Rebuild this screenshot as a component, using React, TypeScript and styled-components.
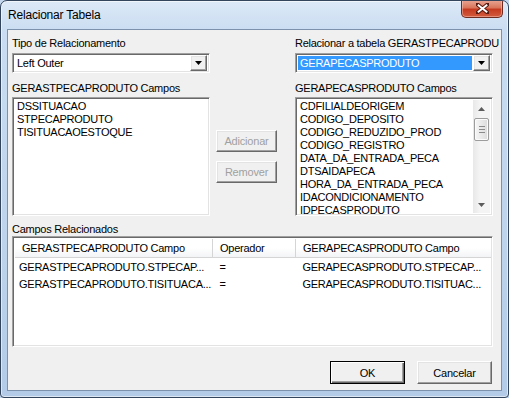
import styled, { createGlobalStyle } from "styled-components";

const GlobalStyle = createGlobalStyle`
  html, body {
    margin: 0;
    padding: 0;
    background: #c3d7ee;
  }
  body {
    font-family: "Liberation Sans", Arial, sans-serif;
    font-size: 11px;
    color: #000;
  }
`;

const Window = styled.div`
  width: 509px;
  height: 398px;
  box-sizing: border-box;
  display: flex;
  flex-direction: column;
  border: 1px solid #33455c;
  border-radius: 7px 7px 4px 4px;
  background: linear-gradient(180deg, #dce9f7 0%, #c9dcf1 8%, #bed4ec 60%, #b3cbe7 100%);
  box-shadow: inset 0 0 0 1px rgba(255, 255, 255, 0.55);
  overflow: hidden;
`;

const TitleBar = styled.div`
  height: 28px;
  flex: none;
  display: flex;
  align-items: flex-start;
  padding-left: 7px;
`;

const Title = styled.div`
  font-size: 12px;
  letter-spacing: -0.2px;
  line-height: 28px;
  color: #000;
  flex: 1;
`;

const CloseButton = styled.div`
  width: 42px;
  height: 18px;
  margin-top: -1px;
  margin-right: 5px;
  box-sizing: border-box;
  border: 1px solid #6e2b20;
  border-top: none;
  border-radius: 0 0 5px 5px;
  background: linear-gradient(180deg, #e9a896 0%, #d9765c 45%, #c53a20 55%, #d25c3f 100%);
  box-shadow: inset 0 0 0 1px rgba(255, 210, 200, 0.45);
  display: flex;
  align-items: center;
  justify-content: center;
`;

const Client = styled.div`
  flex: 1;
  margin: 0 6px 6px 6px;
  border: 1px solid #7c91ab;
  background: #f0f0f0;
  display: flex;
  flex-direction: column;
  padding: 6px 8px 0 4px;
`;

const TopGrid = styled.div`
  display: grid;
  grid-template-columns: 198px 85px 198px;
`;

const Column = styled.div`
  display: flex;
  flex-direction: column;
  min-width: 0;
`;

const Label = styled.div<{ $gap?: number }>`
  height: 14px;
  line-height: 14px;
  margin-top: ${({ $gap }) => $gap ?? 0}px;
  letter-spacing: -0.25px;
  white-space: nowrap;
`;

const sunken = `
  box-sizing: border-box;
  border-style: solid;
  border-width: 1px;
  border-color: #a0a0a0 #ffffff #ffffff #a0a0a0;
  box-shadow: inset 1px 1px 0 #696969, inset -1px -1px 0 #e3e3e3;
  background: #fff;
`;

const raised = `
  box-sizing: border-box;
  border-style: solid;
  border-width: 1px;
  border-color: #ffffff #696969 #696969 #ffffff;
  box-shadow: inset -1px -1px 0 #a0a0a0, inset 1px 1px 0 #e3e3e3;
  background: #f0f0f0;
`;

const Combo = styled.div`
  ${sunken}
  margin-top: 3px;
  height: 20px;
  display: flex;
  align-items: center;
  padding: 2px;
`;

const ComboText = styled.div<{ $selected?: boolean }>`
  flex: 1;
  height: 14px;
  line-height: 14px;
  margin-right: 1px;
  padding-left: 2px;
  letter-spacing: -0.25px;
  background: ${({ $selected }) => ($selected ? "#3399ff" : "transparent")};
  color: ${({ $selected }) => ($selected ? "#fff" : "#000")};
`;

const ComboArrow = styled.div`
  ${raised}
  width: 17px;
  height: 16px;
  display: flex;
  align-items: center;
  justify-content: center;
`;

const ListBox = styled.div`
  ${sunken}
  margin-top: 2px;
  height: 119px;
  display: flex;
  padding: 2px;
  overflow: hidden;
`;

const ListItems = styled.div`
  flex: 1;
  padding-left: 2px;
  min-width: 0;
`;

const ListItem = styled.div`
  height: 13px;
  line-height: 13px;
  letter-spacing: -0.25px;
  white-space: nowrap;
`;

const ScrollBar = styled.div`
  width: 17px;
  display: flex;
  flex-direction: column;
  background: linear-gradient(90deg, #e8e8e8 0%, #f4f4f4 40%, #f4f4f4 100%);
`;

const ScrollArrow = styled.div`
  height: 17px;
  display: flex;
  align-items: center;
  justify-content: center;
`;

const ScrollTrack = styled.div`
  flex: 1;
  padding: 1px 1px 0 1px;
`;

const Thumb = styled.div`
  height: 23px;
  box-sizing: border-box;
  border: 1px solid #9c9c9c;
  border-radius: 2px;
  background: linear-gradient(90deg, #f6f6f6 0%, #e9e9e9 50%, #dcdcdc 100%);
  box-shadow: inset 0 0 0 1px #fbfbfb;
  display: flex;
  flex-direction: column;
  align-items: center;
  justify-content: center;
  gap: 2px;
`;

const Grip = styled.div`
  width: 6px;
  height: 1px;
  background: #8a8a8a;
`;

const MiddleColumn = styled.div`
  display: flex;
  flex-direction: column;
  padding: 94px 0 0 6px;
  gap: 9px;
`;

const Button = styled.div<{ $disabled?: boolean; $default?: boolean; $width: number; $height?: number }>`
  ${raised}
  width: ${({ $width }) => $width}px;
  height: ${({ $height }) => $height ?? 23}px;
  display: flex;
  align-items: center;
  justify-content: center;
  letter-spacing: -0.2px;
  color: ${({ $disabled }) => ($disabled ? "#a0a0a0" : "#000")};
  ${({ $default }) =>
    $default
      ? `
    border: 1px solid #000;
    box-shadow: inset 1px 1px 0 #fff, inset -1px -1px 0 #696969, inset -2px -2px 0 #a0a0a0;
  `
      : ""}
`;

const ListView = styled.div`
  ${sunken}
  height: 111px;
  padding: 2px;
  display: flex;
  flex-direction: column;
`;

const Header = styled.div`
  display: flex;
  height: 19px;
  width: 476px;
  box-sizing: border-box;
  border-bottom: 1px solid #d5d5d5;
  background: linear-gradient(180deg, #ffffff 0%, #ffffff 50%, #f3f4f6 100%);
`;

const HeaderCell = styled.div<{ $width: number; $last?: boolean }>`
  width: ${({ $width }) => $width}px;
  box-sizing: border-box;
  padding-left: 7px;
  line-height: 18px;
  letter-spacing: -0.25px;
  border-right: ${({ $last }) => ($last ? "none" : "1px solid #d5d5d5")};
  white-space: nowrap;
  overflow: hidden;
`;

const Row = styled.div`
  display: flex;
  height: 17px;
  align-items: center;
`;

const Cell = styled.div<{ $width: number; $pad: number }>`
  width: ${({ $width }) => $width}px;
  box-sizing: border-box;
  padding-left: ${({ $pad }) => $pad}px;
  letter-spacing: -0.25px;
  white-space: nowrap;
  overflow: hidden;
`;

const Footer = styled.div`
  display: flex;
  justify-content: flex-end;
  gap: 12px;
  padding-top: 14px;
  padding-right: 1px;
`;

const ArrowDown = () => (
  <svg width="7" height="4" viewBox="0 0 7 4">
    <path d="M0 0h7L3.5 4z" fill="#000" />
  </svg>
);

const leftFields = ["DSSITUACAO", "STPECAPRODUTO", "TISITUACAOESTOQUE"];

const rightFields = [
  "CDFILIALDEORIGEM",
  "CODIGO_DEPOSITO",
  "CODIGO_REDUZIDO_PROD",
  "CODIGO_REGISTRO",
  "DATA_DA_ENTRADA_PECA",
  "DTSAIDAPECA",
  "HORA_DA_ENTRADA_PECA",
  "IDACONDICIONAMENTO",
  "IDPECASPRODUTO",
];

const relations = [
  ["GERASTPECAPRODUTO.STPECAP...", "=", "GERAPECASPRODUTO.STPECAP..."],
  ["GERASTPECAPRODUTO.TISITUACA...", "=", "GERAPECASPRODUTO.TISITUAC..."],
];

export default function App() {
  return (
    <>
      <GlobalStyle />
      <Window>
        <TitleBar>
          <Title>Relacionar Tabela</Title>
          <CloseButton>
            <svg width="13" height="11" viewBox="0 0 13 11">
              <path
                d="M1.5 1.5l10 8M11.5 1.5l-10 8"
                stroke="#5a1a10"
                strokeWidth="4"
                strokeLinecap="round"
              />
              <path d="M1.8 1.8l9.4 7.4M11.2 1.8l-9.4 7.4" stroke="#fff" strokeWidth="2" />
            </svg>
          </CloseButton>
        </TitleBar>

        <Client>
          <TopGrid>
            <Column>
              <Label>Tipo de Relacionamento</Label>
              <Combo>
                <ComboText>Left Outer</ComboText>
                <ComboArrow>
                  <ArrowDown />
                </ComboArrow>
              </Combo>
              <Label $gap={8}>GERASTPECAPRODUTO Campos</Label>
              <ListBox>
                <ListItems>
                  {leftFields.map((f) => (
                    <ListItem key={f}>{f}</ListItem>
                  ))}
                </ListItems>
              </ListBox>
            </Column>

            <MiddleColumn>
              <Button $disabled $width={61} $height={22}>Adicionar</Button>
              <Button $disabled $width={61} $height={22}>Remover</Button>
            </MiddleColumn>

            <Column>
              <Label>Relacionar a tabela GERASTPECAPRODU</Label>
              <Combo>
                <ComboText $selected>GERAPECASPRODUTO</ComboText>
                <ComboArrow>
                  <ArrowDown />
                </ComboArrow>
              </Combo>
              <Label $gap={8}>GERAPECASPRODUTO Campos</Label>
              <ListBox>
                <ListItems>
                  {rightFields.map((f) => (
                    <ListItem key={f}>{f}</ListItem>
                  ))}
                </ListItems>
                <ScrollBar>
                  <ScrollArrow>
                    <svg width="7" height="4" viewBox="0 0 7 4">
                      <path d="M0 4h7L3.5 0z" fill="#5b5b5b" />
                    </svg>
                  </ScrollArrow>
                  <ScrollTrack>
                    <Thumb>
                      <Grip />
                      <Grip />
                      <Grip />
                    </Thumb>
                  </ScrollTrack>
                  <ScrollArrow>
                    <svg width="7" height="4" viewBox="0 0 7 4">
                      <path d="M0 0h7L3.5 4z" fill="#5b5b5b" />
                    </svg>
                  </ScrollArrow>
                </ScrollBar>
              </ListBox>
            </Column>
          </TopGrid>

          <Label $gap={6}>Campos Relacionados</Label>
          <ListView>
            <Header>
              <HeaderCell $width={198}>GERASTPECAPRODUTO Campo</HeaderCell>
              <HeaderCell $width={83}>Operador</HeaderCell>
              <HeaderCell $width={195} $last>
                GERAPECASPRODUTO Campo
              </HeaderCell>
            </Header>
            {relations.map((r) => (
              <Row key={r[0]}>
                <Cell $width={198} $pad={4}>{r[0]}</Cell>
                <Cell $width={83} $pad={7}>{r[1]}</Cell>
                <Cell $width={195} $pad={7}>{r[2]}</Cell>
              </Row>
            ))}
          </ListView>

          <Footer>
            <Button $default $width={75}>OK</Button>
            <Button $width={75}>Cancelar</Button>
          </Footer>
        </Client>
      </Window>
    </>
  );
}
